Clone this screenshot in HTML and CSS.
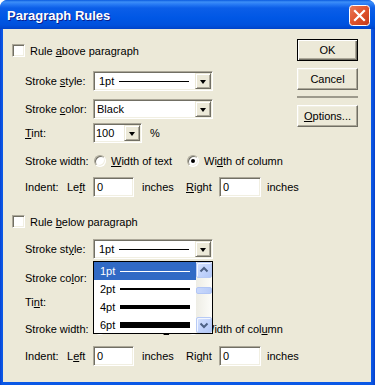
FILE: index.html
```html
<!DOCTYPE html>
<html>
<head>
<meta charset="utf-8">
<link rel="stylesheet" href="styles.css">
</head>
<body>
<div class="window">
  <div class="titlebar">
    <span class="title">Paragraph Rules</span>
    <span class="close">
      <svg width="21" height="21" viewBox="0 0 21 21">
        <defs>
          <linearGradient id="cg" x1="0" y1="0" x2="1" y2="1">
            <stop offset="0" stop-color="#E97B5A"/>
            <stop offset="0.5" stop-color="#E0532C"/>
            <stop offset="1" stop-color="#C2391A"/>
          </linearGradient>
        </defs>
        <rect x="0.5" y="0.5" width="20" height="20" rx="3" fill="url(#cg)" stroke="#FFFFFF"/>
        <path d="M6 6 L15 15 M15 6 L6 15" stroke="#FFFFFF" stroke-width="2.2" stroke-linecap="square"/>
      </svg>
    </span>
  </div>
  <div class="client">
    <div class="main">
      <div class="rule rule-above">
        <div class="check-row"><span class="checkbox"></span><span class="check-label">Rule <u>a</u>bove paragraph</span></div>
        <div class="row row-style">
          <span class="lbl">Stroke <u>s</u>tyle:</span>
          <div class="combo combo-wide">
            <div class="combo-field combo-style"><span class="pt">1pt</span><span class="sample s1"></span></div>
            <span class="arrow-btn"><span class="tri"></span></span>
          </div>
        </div>
        <div class="row row-color">
          <span class="lbl">Stroke <u>c</u>olor:</span>
          <div class="combo combo-wide">
            <div class="combo-field">Black</div>
            <span class="arrow-btn"><span class="tri"></span></span>
          </div>
        </div>
        <div class="row row-tint">
          <span class="lbl"><u>T</u>int:</span>
          <div class="combo combo-tint">
            <div class="combo-field combo-num">100</div>
            <span class="arrow-btn"><span class="tri"></span></span>
          </div>
          <span class="pct">%</span>
        </div>
        <div class="row row-width">
          <span class="lbl">Stroke width:</span>
          <span class="opt opt-text"><span class="radio"></span><span><u>W</u>idth of text</span></span>
          <span class="opt"><span class="radio checked"></span><span>Wi<u>d</u>th of column</span></span>
        </div>
        <div class="row row-indent">
          <span class="lbl-indent">Indent:</span>
          <span class="lbl-left">Le<u>f</u>t</span>
          <span class="field field-left">0</span>
          <span class="unit">inches</span>
          <span class="lbl-right"><u>R</u>ight</span>
          <span class="field field-right">0</span>
          <span class="unit unit-right">inches</span>
        </div>
      </div>

      <div class="rule rule-below">
        <div class="check-row"><span class="checkbox"></span><span class="check-label">Rule <u>b</u>elow paragraph</span></div>
        <div class="row row-style">
          <span class="lbl">Stroke st<u>y</u>le:</span>
          <div class="combo combo-wide combo-open">
            <div class="combo-field combo-style"><span class="pt">1pt</span><span class="sample s1"></span></div>
            <span class="arrow-btn"><span class="tri"></span></span>
            <div class="dropdown">
              <div class="items">
                <div class="item selected"><span class="pt">1pt</span><span class="sample s1"></span></div>
                <div class="item"><span class="pt">2pt</span><span class="sample s2"></span></div>
                <div class="item"><span class="pt">4pt</span><span class="sample s4"></span></div>
                <div class="item"><span class="pt">6pt</span><span class="sample s6"></span></div>
              </div>
              <div class="scrollbar">
                <span class="sb-btn">
                  <svg width="14" height="14" viewBox="0 0 14 14"><path d="M3.5 8.5 L7 5 L10.5 8.5" fill="none" stroke="#4D6185" stroke-width="2"/></svg>
                </span>
                <span class="sb-track"><span class="sb-thumb"></span></span>
                <span class="sb-btn">
                  <svg width="14" height="14" viewBox="0 0 14 14"><path d="M3.5 5.5 L7 9 L10.5 5.5" fill="none" stroke="#4D6185" stroke-width="2"/></svg>
                </span>
              </div>
            </div>
          </div>
        </div>
        <div class="row row-color">
          <span class="lbl">Stroke co<u>l</u>or:</span>
          <div class="combo combo-wide">
            <div class="combo-field">Black</div>
            <span class="arrow-btn"><span class="tri"></span></span>
          </div>
        </div>
        <div class="row row-tint">
          <span class="lbl">Ti<u>n</u>t:</span>
          <div class="combo combo-tint">
            <div class="combo-field combo-num">100</div>
            <span class="arrow-btn"><span class="tri"></span></span>
          </div>
          <span class="pct">%</span>
        </div>
        <div class="row row-width">
          <span class="lbl">Stroke width:</span>
          <span class="opt opt-text"><span class="radio"></span><span>Width of te<u>x</u>t</span></span>
          <span class="opt"><span class="radio checked"></span><span>Width of col<u>u</u>mn</span></span>
        </div>
        <div class="row row-indent">
          <span class="lbl-indent">Indent:</span>
          <span class="lbl-left">L<u>e</u>ft</span>
          <span class="field field-left">0</span>
          <span class="unit">inches</span>
          <span class="lbl-right">Ri<u>g</u>ht</span>
          <span class="field field-right">0</span>
          <span class="unit unit-right">inches</span>
        </div>
      </div>
    </div>

    <div class="buttons">
      <span class="btn btn-default">OK</span>
      <span class="btn">Cancel</span>
      <span class="sep"></span>
      <span class="btn"><span><u>O</u>ptions...</span></span>
    </div>
  </div>
</div>
</body>
</html>
```
FILE: styles.css
```css
* { box-sizing: border-box; }
html, body { margin: 0; padding: 0; }
body {
  width: 375px;
  height: 385px;
  overflow: hidden;
  background: #FFFFFF;
  font-family: "Liberation Sans", Arial, sans-serif;
  font-size: 11px;
  color: #000;
}
u { text-decoration: underline; text-underline-offset: 1px; }

.window {
  width: 375px;
  height: 385px;
  display: flex;
  flex-direction: column;
  background: linear-gradient(to right, #0842D2 0, #0A58E6 2px, #0A58E6 372px, #0740C9 375px);
  border-radius: 8px 8px 0 0;
}

.titlebar {
  height: 29px;
  flex: none;
  display: flex;
  justify-content: space-between;
  align-items: flex-start;
  padding: 0 5px 0 7px;
  border-radius: 7px 7px 0 0;
  background: linear-gradient(to bottom, #0A5ADF 0px, #3D8FF7 2px, #2A7DF5 4px, #0B5EE8 8px, #0057E5 18px, #0051DD 25px, #0047CF 28px, #0041C7 29px);
}
.title {
  margin-top: 8px;
  line-height: 15px;
  font-weight: bold;
  font-size: 13px;
  color: #FFFFFF;
  text-shadow: 1px 1px 0 #0A1E8C;
}
.close {
  margin-top: 5px;
  width: 21px;
  height: 21px;
  display: block;
}
.close svg { display: block; }

.client {
  flex: 1;
  margin: 0 4px 3px 3px;
  background: #ECE9D8;
  display: flex;
}

.main {
  flex: 1;
  min-width: 0;
  padding: 15px 0 0 9px;
  display: flex;
  flex-direction: column;
}
.rule { display: flex; flex-direction: column; }
.rule-below { margin-top: 18px; }

.check-row {
  height: 13px;
  display: flex;
  align-items: center;
}
.checkbox {
  width: 13px;
  height: 13px;
  background: #FFFFFF;
  border-top: 1px solid #ACA899;
  border-left: 1px solid #ACA899;
  border-bottom: 1px solid #FFFFFF;
  border-right: 1px solid #FFFFFF;
  box-shadow: inset 1px 1px 0 #716F64, inset -1px -1px 0 #F1EFE2;
  flex: none;
}
.check-label { margin-left: 5px; }

.row {
  display: flex;
  align-items: center;
  margin-left: 13px;
  position: relative;
  white-space: nowrap;
}
.row-style { height: 20px; margin-top: 14px; }
.row-color { height: 20px; margin-top: 8px; }
.row-tint { height: 20px; margin-top: 4px; }
.row-width { height: 16px; margin-top: 10px; }
.row-indent { height: 20px; margin-top: 8px; }
.rule-below .row-style { margin-top: 11px; }
.rule-below .row-color { margin-top: 9px; }
.rule-below .row-width { margin-top: 9px; }
.rule-below .row-indent { margin-top: 9px; }

.lbl { width: 68px; flex: none; }

.combo {
  position: relative;
  height: 20px;
  display: flex;
  align-items: stretch;
  background: #FFFFFF;
  border-top: 1px solid #ACA899;
  border-left: 1px solid #ACA899;
  border-bottom: 1px solid #FFFFFF;
  border-right: 1px solid #FFFFFF;
  box-shadow: inset 1px 1px 0 #716F64, inset -1px -1px 0 #F1EFE2;
  padding: 1px;
  flex: none;
}
.combo-wide { width: 120px; }
.combo-tint { width: 49px; }
.combo-field {
  flex: 1;
  display: flex;
  align-items: center;
  padding-left: 2px;
  overflow: hidden;
  white-space: nowrap;
}
.combo-style { padding-left: 4px; }
.combo-num { padding-left: 1px; }

.pt { width: 20px; flex: none; }
.sample { width: 70px; flex: none; background: #000; }
.s1 { height: 1px; }
.s2 { height: 2px; }
.s4 { height: 4px; }
.s6 { height: 6px; }

.arrow-btn {
  width: 16px;
  flex: none;
  background: #ECE9D8;
  border-top: 1px solid #ECE9D8;
  border-left: 1px solid #ECE9D8;
  border-bottom: 1px solid #716F64;
  border-right: 1px solid #716F64;
  box-shadow: inset 1px 1px 0 #FFFFFF, inset -1px -1px 0 #ACA899;
  display: flex;
  align-items: center;
  justify-content: center;
}
.tri {
  width: 0;
  height: 0;
  border-left: 3.5px solid transparent;
  border-right: 3.5px solid transparent;
  border-top: 4px solid #000;
  margin-top: 1px;
}

.pct { margin-left: 8px; }

.opt { display: flex; align-items: center; }
.opt-text { width: 93px; margin-left: 1px; flex: none; }
.opt .radio + span { margin-left: 5px; }
.radio {
  width: 12px;
  height: 12px;
  flex: none;
  border-radius: 50%;
  background: #FFFFFF;
  border: 1px solid;
  border-color: #ACA899 #FFFFFF #FFFFFF #ACA899;
  box-shadow: inset 1px 1px 0 #716F64, inset -1px -1px 0 #F1EFE2;
  position: relative;
}
.radio.checked::after {
  content: "";
  position: absolute;
  left: 3px;
  top: 3px;
  width: 4px;
  height: 4px;
  border-radius: 50%;
  background: #000;
}

.lbl-indent { width: 42px; flex: none; }
.lbl-left { width: 26px; flex: none; }
.lbl-right { width: 33px; flex: none; }
.field {
  height: 20px;
  background: #FFFFFF;
  border-top: 1px solid #ACA899;
  border-left: 1px solid #ACA899;
  border-bottom: 1px solid #FFFFFF;
  border-right: 1px solid #FFFFFF;
  box-shadow: inset 1px 1px 0 #716F64, inset -1px -1px 0 #F1EFE2;
  padding-left: 3px;
  display: flex;
  align-items: center;
  flex: none;
}
.field-left { width: 41px; }
.field-right { width: 42px; }
.unit { width: 44px; margin-left: 8px; flex: none; }
.unit-right { margin-left: 6px; width: auto; }

.dropdown {
  position: absolute;
  left: -1px;
  top: 21px;
  width: 120px;
  height: 73px;
  background: #FFFFFF;
  border: 1px solid #000;
  display: flex;
  z-index: 10;
  overflow: hidden;
}
.items { flex: 1; display: flex; flex-direction: column; }
.item {
  height: 18px;
  flex: none;
  display: flex;
  align-items: center;
  padding-left: 6px;
}
.item.selected { background: #316AC5; color: #FFFFFF; }
.item.selected .sample { background: #FFFFFF; }

.scrollbar {
  width: 16px;
  flex: none;
  display: flex;
  flex-direction: column;
  background: linear-gradient(to right, #EEEDE5, #FCFCF9);
}
.sb-btn {
  height: 16px;
  flex: none;
  display: flex;
  align-items: center;
  justify-content: center;
  border-radius: 2px;
  border: 1px solid #B7CAF5;
  background: linear-gradient(135deg, #D8E3FD 0%, #C3D4FC 50%, #B2C7F6 100%);
  box-shadow: inset 1px 1px 0 #F2F6FF;
}
.sb-btn svg { display: block; }
.sb-track {
  flex: 1;
  display: flex;
  flex-direction: column;
  padding-top: 9px;
}
.sb-thumb {
  height: 7px;
  border-radius: 2px;
  border: 1px solid #B2C6F5;
  background: linear-gradient(to right, #C9D8FC, #B8CCF8);
}

.buttons {
  width: 61px;
  flex: none;
  margin: 10px 13px 0 0;
  display: flex;
  flex-direction: column;
}
.btn {
  height: 22px;
  display: flex;
  align-items: center;
  justify-content: center;
  background: #ECE9D8;
  border-top: 1px solid #FFFFFF;
  border-left: 1px solid #FFFFFF;
  border-bottom: 1px solid #716F64;
  border-right: 1px solid #716F64;
  box-shadow: inset -1px -1px 0 #ACA899, inset 1px 1px 0 #F1EFE2;
  margin-bottom: 7px;
}
.btn-default {
  border: 1px solid #000;
  box-shadow: inset 1px 1px 0 #FFFFFF, inset -1px -1px 0 #716F64, inset -2px -2px 0 #ACA899;
}
.sep {
  height: 2px;
  background: #9D9A8C;
  margin: -1px 0 7px 0;
}
```
